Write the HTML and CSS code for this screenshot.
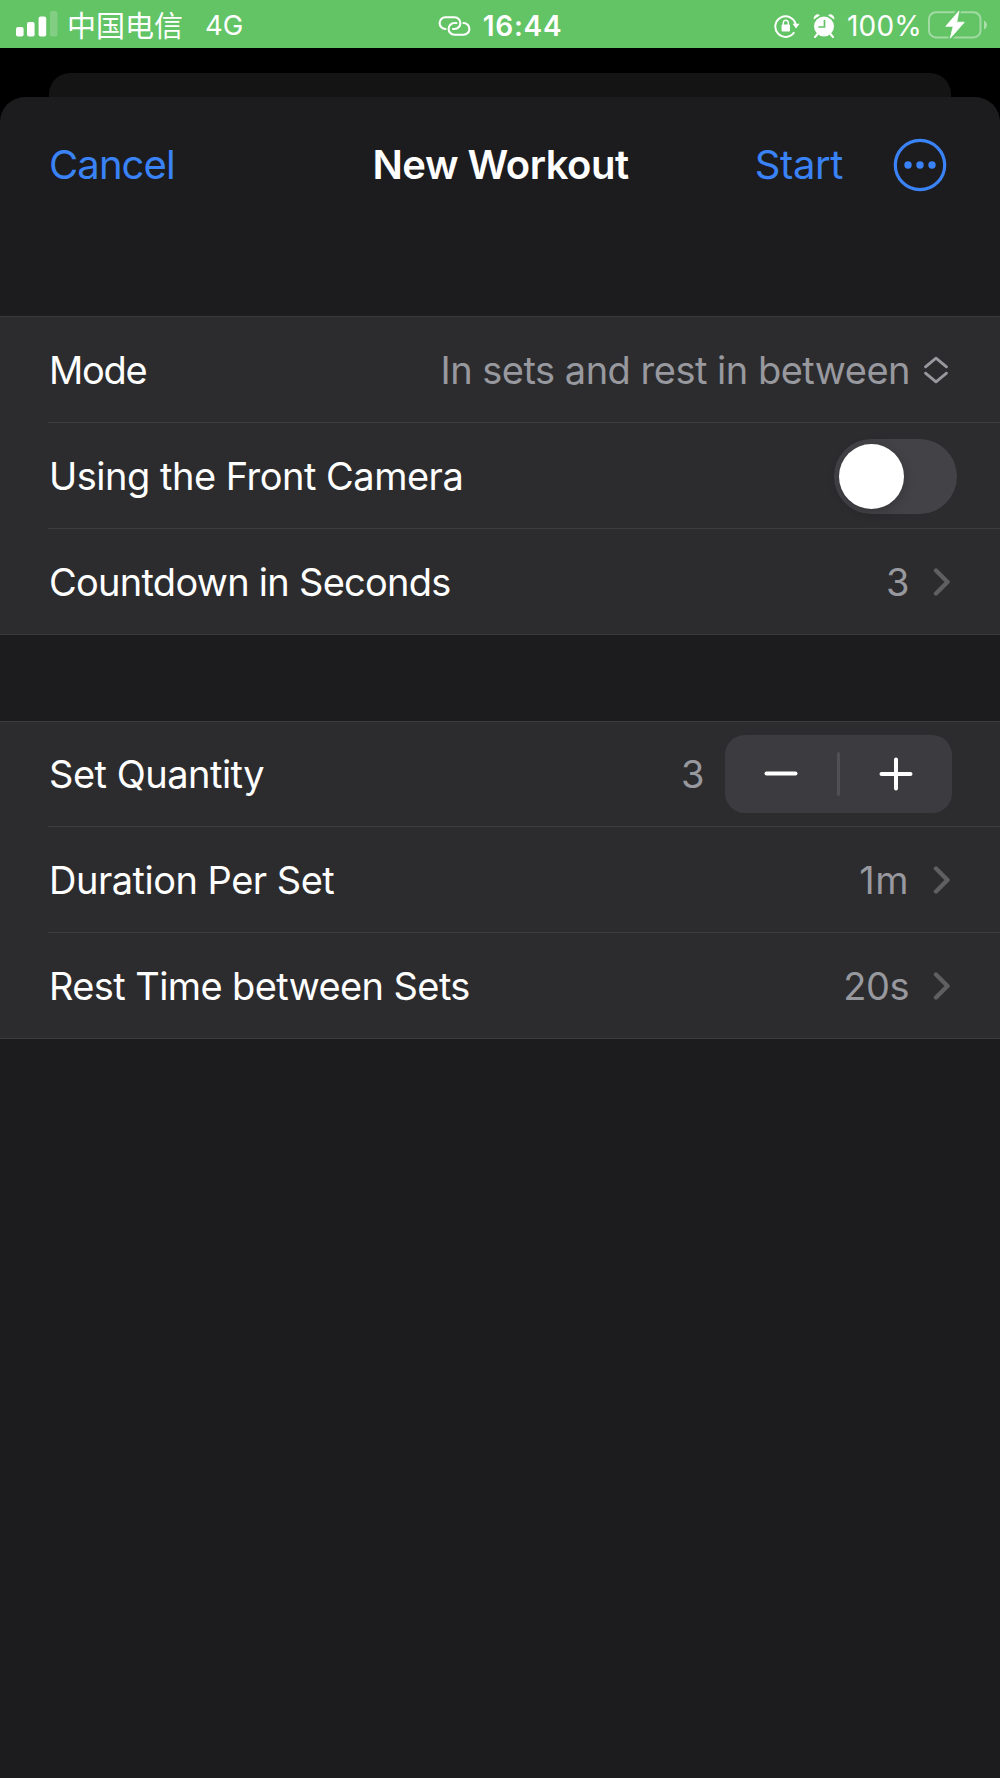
FILE: index.html
```
<!doctype html>
<html lang="en">
  <head>
    <meta charset="UTF-8" />
    <meta name="viewport" content="width=device-width, initial-scale=1" />
    <title>New Workout</title>
    <link rel="stylesheet" href="styles.css">
  </head>
  <body>
    <div class="status-bar">
      <div class="status-left">
        <svg class="signal" width="42" height="26" viewBox="0 0 42 26" fill="#fff">
          <rect x="0" y="16" width="7.6" height="9.6" rx="2" />
          <rect x="11" y="11" width="7.6" height="14.6" rx="2" />
          <rect x="22.6" y="5.4" width="7.6" height="20.2" rx="2" />
          <rect x="34" y="0" width="7.4" height="25.6" rx="2" opacity="0.2" />
        </svg>
        <span class="carrier">中国电信</span>
        <span class="network">4G</span>
      </div>
      <div class="status-center">
        <svg width="34" height="20" viewBox="0 0 34 20" fill="none" stroke="#fff" stroke-width="2.1" stroke-linecap="round">
          <path d="M7.500 13A5.900 5.900 0 0 1 7.500 1.200H16.500A5.900 5.900 0 0 1 16.500 13H15" />
          <path d="M25.500 7A5.900 5.900 0 0 1 25.500 18.800H16.500A5.900 5.900 0 0 1 16.500 7H18.500" />
        </svg>
        <span class="time">16:44</span>
      </div>
      <div class="status-right">
        <svg class="lock" width="26" height="24" viewBox="0 0 26 24">
          <path d="M20.2 18.300A10.300 10.300 0 1 1 21.700 10.500" fill="none" stroke="#fff" stroke-width="2" />
          <path d="M18.600 9.700H25.600L22 14.600Z" fill="#fff" />
          <rect x="7.600" y="10.500" width="8.400" height="6.900" rx="1" fill="#fff" />
          <path d="M9.300 11V9A2.500 2.800 0 0 1 14.300 9V11" fill="none" stroke="#fff" stroke-width="1.400" />
        </svg>
        <svg class="alarm" width="22" height="24" viewBox="0 0 22 24">
          <circle cx="11" cy="12.500" r="10" fill="#fff" />
          <path d="M0.800 5.500A4 4 0 0 1 7 1.200ZM21.200 5.500A4 4 0 0 0 15 1.200Z" fill="#fff" />
          <path d="M4.500 20L2 23M17.500 20L20 23" stroke="#fff" stroke-width="2" stroke-linecap="round" />
          <path d="M11.500 6.500V13H6" fill="none" stroke="#63c466" stroke-width="1.700" stroke-linecap="round" />
        </svg>
        <span class="percent">100%</span>
        <svg class="battery" width="60" height="30" viewBox="0 0 60 30">
          <rect x="1" y="2.200" width="51.500" height="25.200" rx="7" fill="none" stroke="#fff" stroke-opacity="0.400" stroke-width="2" />
          <path d="M56 10.500Q59 12 59 14.900T56 19.500Z" fill="#fff" fill-opacity="0.450" />
          <path d="M31 0.500L17.500 16.500H25.200L22.200 28.800L36.500 12H28.700Z" fill="#fff" stroke="#63c466" stroke-width="4" stroke-linejoin="round" />
          <path d="M31 1L17.800 16.300H25.200L22.200 28.300L36.300 12.200H28.700Z" fill="#fff" stroke="#fff" stroke-width="0.800" stroke-linejoin="round" />
        </svg>
      </div>
    </div>

    <div class="back-card"></div>

    <div class="sheet">
      <div class="nav-bar">
        <a class="cancel">Cancel</a>
        <h1>New Workout</h1>
        <div class="nav-actions">
          <a class="start">Start</a>
          <svg width="54" height="54" viewBox="0 0 54 54">
            <circle cx="27" cy="27" r="24.700" fill="none" stroke="#3a83f7" stroke-width="3.200" />
            <g fill="#3a83f7">
              <circle cx="15" cy="27" r="3.700" />
              <circle cx="27" cy="27" r="3.700" />
              <circle cx="39" cy="27" r="3.700" />
            </g>
          </svg>
        </div>
      </div>

      <!-- General options -->
      <div class="section">
        <div class="row">
          <span class="label mode">Mode</span>
          <span class="value mode-value">In sets and rest in between</span>
          <svg class="updown" width="26" height="28" viewBox="0 0 26 28" fill="none" stroke="#98989f" stroke-width="2.800" stroke-linecap="round" stroke-linejoin="round">
            <path d="M2.500 10.800L13 2.200L23.500 10.800M2.500 17.200L13 25.800L23.500 17.200" />
          </svg>
        </div>
        <div class="row">
          <span class="label">Using the Front Camera</span>
          <div class="switch"><div class="knob"></div></div>
        </div>
        <div class="row">
          <span class="label countdown">Countdown in Seconds</span>
          <span class="value">3</span>
          <svg class="chevron" width="18" height="28" viewBox="0 0 18 28">
            <path d="M3 2.500L14.500 14L3 25.500" />
          </svg>
        </div>
      </div>

      <!-- Set options -->
      <div class="section sets">
        <div class="row">
          <span class="label">Set Quantity</span>
          <span class="value">3</span>
          <div class="stepper">
            <svg width="34" height="34" viewBox="0 0 34 34"><path d="M2.500 16.500H31.500" /></svg>
            <div class="divider"></div>
            <svg width="34" height="34" viewBox="0 0 34 34"><path d="M2.500 17H31.500M17 2.500V31.500" /></svg>
          </div>
        </div>
        <div class="row">
          <span class="label">Duration Per Set</span>
          <span class="value duration-value">1m</span>
          <svg class="chevron" width="18" height="28" viewBox="0 0 18 28">
            <path d="M3 2.500L14.500 14L3 25.500" />
          </svg>
        </div>
        <div class="row">
          <span class="label rest">Rest Time between Sets</span>
          <span class="value">20s</span>
          <svg class="chevron" width="18" height="28" viewBox="0 0 18 28">
            <path d="M3 2.500L14.500 14L3 25.500" />
          </svg>
        </div>
      </div>
    </div>
  </body>
</html>
```
FILE: styles.css
```
* {
  box-sizing: border-box;
}

body {
  font-family: Inter, "Noto Sans CJK SC", sans-serif;
  margin: 0;
  width: 1000px;
  height: 1778px;
  display: flex;
  flex-direction: column;
  background-color: #000;
  color: #fff;
  overflow: hidden;
  white-space: nowrap;
}

svg {
  display: block;
  flex: none;
}

/* Status bar */
.status-bar {
  height: 48px;
  flex: none;
  display: grid;
  grid-template-columns: 1fr auto 1fr;
  align-items: center;
  padding: 3px 12px 0 16px;
  background-color: #63c466;
  font-size: 28px;
  line-height: 1;
}

.status-left,
.status-center,
.status-right {
  display: flex;
  align-items: center;
}

.signal {
  margin-top: -3px;
}

.carrier {
  font-family: "Noto Sans CJK SC", sans-serif;
  font-size: 29px;
  font-weight: 400;
  margin: -2px 0 0 9px;
}

.network {
  margin-left: 22px;
  font-size: 27.5px;
}

.status-center {
  gap: 11px;
  margin-right: 4px;
}

.time {
  font-weight: 600;
  letter-spacing: 0.7px;
}

.status-right {
  justify-content: flex-end;
}

.alarm {
  margin-left: 13px;
}

.percent {
  letter-spacing: 0.2px;
  margin: 0 6px 0 12px;
}

.battery {
  margin-top: -1px;
}

/* Stacked sheets */
.back-card {
  height: 24px;
  flex: none;
  margin: 25px 49px 0;
  border-radius: 21px 21px 0 0;
  background-color: #141414;
}

.sheet {
  flex: 1;
  border-radius: 25px 25px 0 0;
  background-color: #1c1c1e;
}

.nav-bar {
  height: 136px;
  display: grid;
  grid-template-columns: 1fr auto 1fr;
  align-items: center;
  padding: 0 53px 0 49px;
  font-size: 40px;
  line-height: 1;
}

.nav-bar h1 {
  margin: 0 0 0 5px;
  font-size: 40px;
  font-weight: 600;
  letter-spacing: -0.5px;
}

.nav-bar a {
  color: #3a83f7;
}

.cancel {
  letter-spacing: -0.9px;
}

.start {
  letter-spacing: -0.4px;
}

.nav-actions {
  display: flex;
  justify-content: flex-end;
  align-items: center;
  gap: 50px;
}

/* Option lists */
.section {
  margin-top: 83px;
  border: 1px solid #3a3a3c;
  border-width: 1px 0;
  background-color: #2c2c2e;
}

.section.sets {
  margin-top: 86px;
}

.row {
  height: 106px;
  display: flex;
  align-items: center;
  margin-left: 48px;
  padding: 0 49px 0 1px;
  border-bottom: 1px solid #3d3d40;
  font-size: 38px;
  line-height: 1;
}

.row:last-child {
  height: 105px;
  border-bottom: none;
}

.sets .row:first-child {
  height: 105px;
  padding-right: 48px;
}

.label {
  flex: 1;
  letter-spacing: -0.5px;
}

.label.mode {
  letter-spacing: -1.3px;
}

.label.countdown {
  letter-spacing: -0.73px;
}

.label.rest {
  letter-spacing: -0.6px;
}

.value {
  color: #98989f;
  letter-spacing: -0.5px;
}

.duration-value {
  letter-spacing: 0.5px;
}

.updown {
  margin: 0 2px 0 13px;
}

.chevron {
  margin-left: 24px;
  fill: none;
  stroke: #5f5f62;
  stroke-width: 4.4;
  stroke-linecap: round;
  stroke-linejoin: round;
}

.switch {
  width: 123px;
  height: 75px;
  margin: 2px -6px 0 0;
  padding: 5px;
  border-radius: 38px;
  background-color: #434347;
}

.knob {
  width: 65px;
  height: 65px;
  border-radius: 50%;
  background-color: #fff;
  box-shadow: 0 3px 12px rgba(0, 0, 0, 0.2);
}

.stepper {
  width: 227px;
  height: 78px;
  margin-left: 21px;
  display: flex;
  align-items: center;
  justify-content: space-between;
  padding: 0 39px;
  border-radius: 20px;
  background-color: #3c3b40;
}

.stepper svg {
  stroke: #fff;
  stroke-width: 4;
  stroke-linecap: round;
}

.divider {
  width: 3px;
  height: 44px;
  border-radius: 2px;
  background-color: #504f54;
}
```
